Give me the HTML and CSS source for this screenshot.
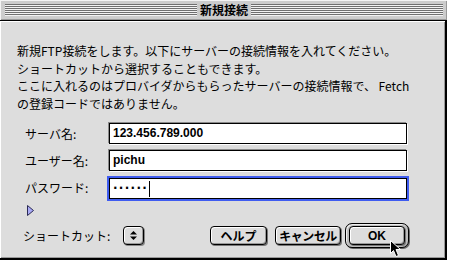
FILE: index.html
```html
<!doctype html>
<html lang="ja">
	<head>
		<title>新規接続</title>
		<link rel="stylesheet" href="styles.css">
	</head>
	<body>
		<div class="window">
			<!-- Title bar with the striped drag area -->
			<div class="titlebar">
				<div class="stripes"></div>
				<div class="title">新規接続</div>
				<div class="stripes"></div>
			</div>

			<div class="content">
				<p class="intro">
					新規FTP接続をします。以下にサーバーの接続情報を入れてください。<br>
					ショートカットから選択することもできます。<br>
					ここに入れるのはプロバイダからもらったサーバーの接続情報で、 Fetch<br>
					の登録コードではありません。
				</p>

				<div class="fields">
					<label class="field-label">サーバ名:</label>
					<div class="edit">123.456.789.000</div>

					<label class="field-label">ユーザー名:</label>
					<div class="edit">pichu</div>

					<label class="field-label">パスワード:</label>
					<div class="edit focused"><span class="dots">······</span><span class="caret"></span></div>
				</div>

				<div class="disclosure">
					<svg width="8" height="12" viewBox="0 0 8 12">
						<polygon points="0.5,0.5 6.5,5.5 0.5,10.5" fill="#a9a9f5" stroke="#2a2a55" stroke-width="1"/>
					</svg>
				</div>

				<div class="bottom">
					<span class="shortcut-label">ショートカット:</span>
					<div class="popup">
						<svg width="11" height="11" viewBox="0 0 11 11">
							<polygon points="5.5,1 9,4.5 2,4.5" fill="#000"/>
							<polygon points="2,6.5 9,6.5 5.5,10" fill="#000"/>
						</svg>
					</div>

					<div class="buttons">
						<button class="btn help">ヘルプ</button>
						<button class="btn cancel">キャンセル</button>
						<div class="default-ring"><button class="btn ok">OK</button></div>
					</div>
				</div>

				<!-- mouse pointer resting on the OK button -->
				<svg class="pointer" width="12" height="18" viewBox="0 0 12 18">
					<polygon points="0.5,0.5 0.5,13.5 3.5,10.5 6,16.5 8.5,15.5 6,9.5 10.5,9.5" fill="#000" stroke="#fff" stroke-width="1" stroke-linejoin="miter"/>
				</svg>
			</div>
		</div>
	</body>
</html>
```

FILE: styles.css
```css
/* Page setup */

body {
	margin: 0;
	background-color: white;
	color: black;
	font-family: "Noto Sans CJK JP", "Noto Sans", sans-serif;
	font-size: 12px;
}

.window {
	width: 447px;
}

/* Title bar */

.titlebar {
	height: 20px;
	display: flex;
	align-items: center;
	gap: 3px;
	padding: 0 4px 0 5px;
	background: #cccccc;
	border-bottom: 1px solid #000;
	box-shadow: inset 1px 1px 0 #f4f4f4, inset -1px -1px 0 #999;
}

.stripes {
	flex: 1;
	height: 12px;
	background: repeating-linear-gradient(to bottom, #6f6f6f 0 1px, #f2f2f2 1px 2px);
}

.title {
	width: 48px;
	text-align: center;
	font-weight: bold;
	font-size: 12px;
	line-height: 14px;
}

/* Dialog body */

.content {
	position: relative;
	height: 216px;
	background: #dddddd;
	border-right: 2px solid #000;
	border-bottom: 2px solid #000;
	box-shadow: inset 1px 1px 0 #fff, inset -1px -1px 0 #999;
	padding-top: 21px;
	box-sizing: content-box;
}

.intro {
	margin: 0;
	padding-left: 17px;
	line-height: 17.5px;
	white-space: nowrap;
}

.fields {
	display: grid;
	grid-template-columns: 84px 298px;
	grid-auto-rows: 21px;
	row-gap: 6px;
	align-items: center;
	margin-top: 11px;
	padding-left: 25px;
}

.field-label {
	line-height: 21px;
}

.edit {
	height: 21px;
	box-sizing: border-box;
	border: 1px solid #000;
	background: #fff;
	box-shadow: -1px -1px 0 #8a8a8a, 1px 1px 0 #fff;
	padding-left: 3px;
	font-family: "Liberation Sans", Arial, sans-serif;
	font-weight: bold;
	font-size: 12px;
	line-height: 19px;
	display: flex;
	align-items: center;
}

.edit.focused {
	box-shadow: 0 0 0 2px #3f5cf0;
	margin-top: 2px;
}

.dots {
	font-family: "DejaVu Sans", sans-serif;
	letter-spacing: 1.3px;
}

.caret {
	width: 1px;
	height: 16px;
	background: #000;
	margin-left: 1px;
}

.disclosure {
	height: 12px;
	margin-top: 7px;
	padding-left: 27px;
}

.disclosure svg {
	display: block;
}

/* Shortcut popup and buttons */

.bottom {
	display: flex;
	align-items: center;
	height: 25px;
	margin-top: 6px;
	padding-left: 23px;
	padding-right: 36px;
}

.shortcut-label {
	width: 100px;
}

.popup {
	width: 21px;
	height: 19px;
	box-sizing: border-box;
	border: 1px solid #000;
	border-radius: 4px;
	background: #dcdcdc;
	box-shadow: inset 1px 1px 0 #fff, inset -1px -1px 0 #999, 1px 1px 0 #888;
	display: flex;
	align-items: center;
	justify-content: center;
}

.popup svg {
	display: block;
}

.buttons {
	margin-left: auto;
	display: flex;
	align-items: center;
	gap: 8px;
}

.btn {
	height: 19px;
	box-sizing: border-box;
	padding: 0;
	border: 1px solid #000;
	border-radius: 4px;
	background: #dddddd;
	box-shadow: inset 1px 1px 0 #fff, inset -1px -1px 0 #999, 1px 1px 0 #777;
	font-family: "Noto Sans CJK JP", sans-serif;
	font-weight: bold;
	font-size: 12px;
	line-height: 16px;
	color: #000;
}

.help {
	width: 57px;
}

.cancel {
	width: 66px;
	letter-spacing: -0.5px;
}

.default-ring {
	width: 64px;
	height: 25px;
	box-sizing: border-box;
	border: 1px solid #000;
	border-radius: 7px;
	background: #bdbdbd;
	box-shadow: inset 1px 1px 0 #eee, 1px 1px 0 #666;
	display: flex;
	align-items: center;
	justify-content: center;
	margin-left: -4px;
}

.ok {
	width: 56px;
	font-family: "Liberation Sans", Arial, sans-serif;
}

.pointer {
	position: absolute;
	left: 390px;
	top: 219px;
}
```
